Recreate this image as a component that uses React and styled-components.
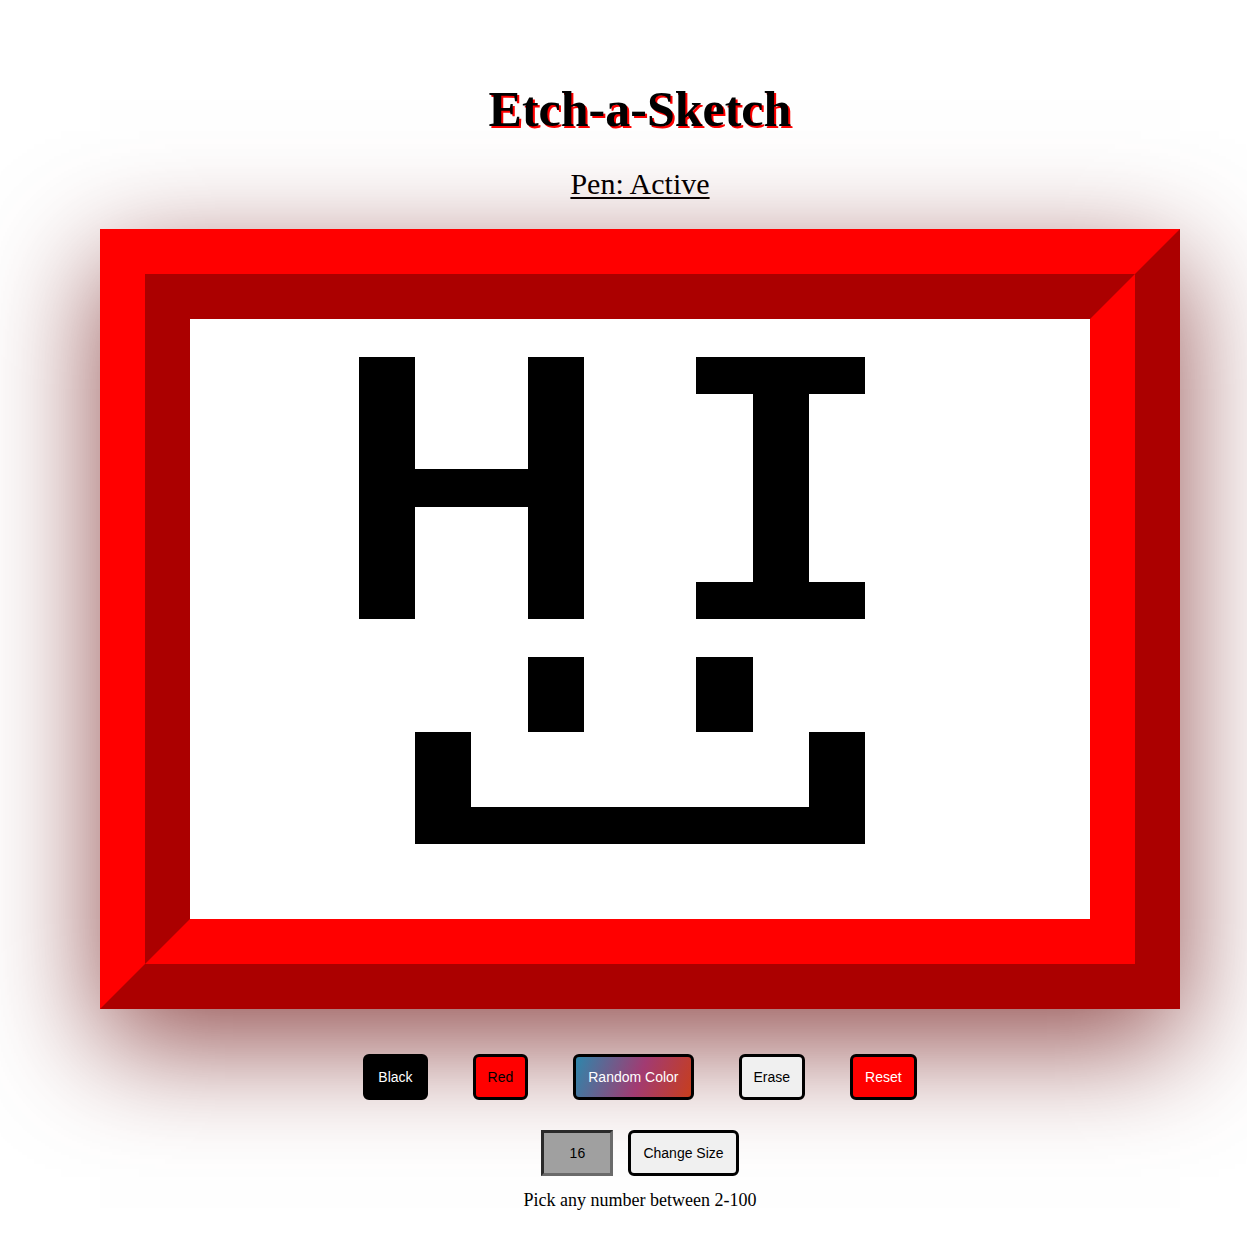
import React from "react";
import styled, { createGlobalStyle } from "styled-components";

const GRID_SIZE = 16;

// cells drawn on the board as [row, col]
const drawn = [
  // H
  [1, 3], [2, 3], [3, 3], [4, 3], [5, 3], [6, 3], [7, 3],
  [1, 6], [2, 6], [3, 6], [4, 6], [5, 6], [6, 6], [7, 6],
  [4, 4], [4, 5],
  // I
  [1, 9], [1, 10], [1, 11],
  [2, 10], [3, 10], [4, 10], [5, 10], [6, 10],
  [7, 9], [7, 10], [7, 11],
  // eyes
  [9, 6], [10, 6], [9, 9], [10, 9],
  // mouth
  [11, 4], [12, 4], [11, 11], [12, 11],
  [13, 4], [13, 5], [13, 6], [13, 7], [13, 8], [13, 9], [13, 10], [13, 11]
];

const filled = new Set(drawn.map(([r, c]) => r * GRID_SIZE + c));

const App = () => {
  const cells = [];
  for (let i = 0; i < GRID_SIZE * GRID_SIZE; i++) {
    cells.push(<Cell key={i} inked={filled.has(i)} />);
  }

  return (
    <>
      <GlobalStyle />
      <Page>
        <Title>Etch-a-Sketch</Title>
        <PenStatus>Pen: Active</PenStatus>
        <OuterFrame>
          <InnerFrame>
            <Board size={GRID_SIZE}>{cells}</Board>
          </InnerFrame>
        </OuterFrame>
        <Controls>
          <ColorButton variant="black">Black</ColorButton>
          <ColorButton variant="red">Red</ColorButton>
          <ColorButton variant="random">Random Color</ColorButton>
          <ColorButton variant="erase">Erase</ColorButton>
          <ColorButton variant="reset">Reset</ColorButton>
        </Controls>
        <SizeRow>
          <SizeInput type="text" defaultValue="16" />
          <ColorButton variant="erase">Change Size</ColorButton>
        </SizeRow>
        <Hint>Pick any number between 2-100</Hint>
      </Page>
    </>
  );
};

const GlobalStyle = createGlobalStyle`
  html, body {
    margin: 0;
    padding: 0;
    background: #fff;
  }

  body {
    font-family: "Liberation Serif", "Times New Roman", serif;
    overflow-x: hidden;
  }
`;

const Page = styled.div`
  display: flex;
  flex-direction: column;
  align-items: center;
  box-sizing: border-box;
  width: 100%;
  padding: 80px 0 40px 33px;
`;

const Title = styled.h1`
  margin: 0;
  font-family: "Liberation Serif", serif;
  font-size: 50px;
  font-weight: bold;
  line-height: normal;
  color: #000;
  text-shadow: 2px 2px 0 #f00;
`;

const PenStatus = styled.h2`
  margin: 29px 0 0;
  font-family: "Liberation Serif", serif;
  font-size: 30px;
  font-weight: normal;
  line-height: normal;
  text-decoration: underline;
  text-decoration-thickness: 2px;
  text-underline-offset: 3px;
`;

const OuterFrame = styled.div`
  margin-top: 28px;
  border: 45px solid;
  border-color: #f00 #ab0000 #ab0000 #f00;
  box-shadow: 0 35px 110px rgba(100, 0, 0, 0.7);
`;

const InnerFrame = styled.div`
  border: 45px solid;
  border-color: #ab0000 #f00 #f00 #ab0000;
`;

const Board = styled.div`
  display: grid;
  grid-template-columns: repeat(${props => props.size}, 1fr);
  grid-template-rows: repeat(${props => props.size}, 1fr);
  width: 900px;
  height: 600px;
  background: #fff;
`;

const Cell = styled.div`
  background: ${props => (props.inked ? "#000" : "transparent")};
`;

const Controls = styled.div`
  display: flex;
  gap: 45px;
  margin-top: 45px;
`;

const buttonLooks = {
  black: "background: #000; color: #fff;",
  red: "background: #f00; color: #000;",
  random:
    "background: linear-gradient(110deg, #2e86ab, #a23b72 55%, #c73e1d); color: #fff;",
  erase: "background: #f0f0f0; color: #000;",
  reset: "background: #f00; color: #fff;"
};

const ColorButton = styled.button`
  height: 46px;
  padding: 0 12px;
  border: 3px solid #000;
  border-radius: 6px;
  font-family: "Liberation Sans", Arial, sans-serif;
  font-size: 14px;
  cursor: pointer;
  ${props => buttonLooks[props.variant]}
`;

const SizeRow = styled.div`
  display: flex;
  gap: 15px;
  margin-top: 30px;
`;

const SizeInput = styled.input`
  width: 72px;
  height: 46px;
  box-sizing: border-box;
  border: 3px solid;
  border-color: #2a2a2a #6a6a6a #6a6a6a #2a2a2a;
  background: #a0a0a0;
  text-align: center;
  font-family: "Liberation Sans", Arial, sans-serif;
  font-size: 14px;
  color: #000;
  outline: none;
`;

const Hint = styled.p`
  margin: 14px 0 0;
  font-family: "Liberation Serif", serif;
  font-size: 18px;
  line-height: normal;
`;

export default App;
